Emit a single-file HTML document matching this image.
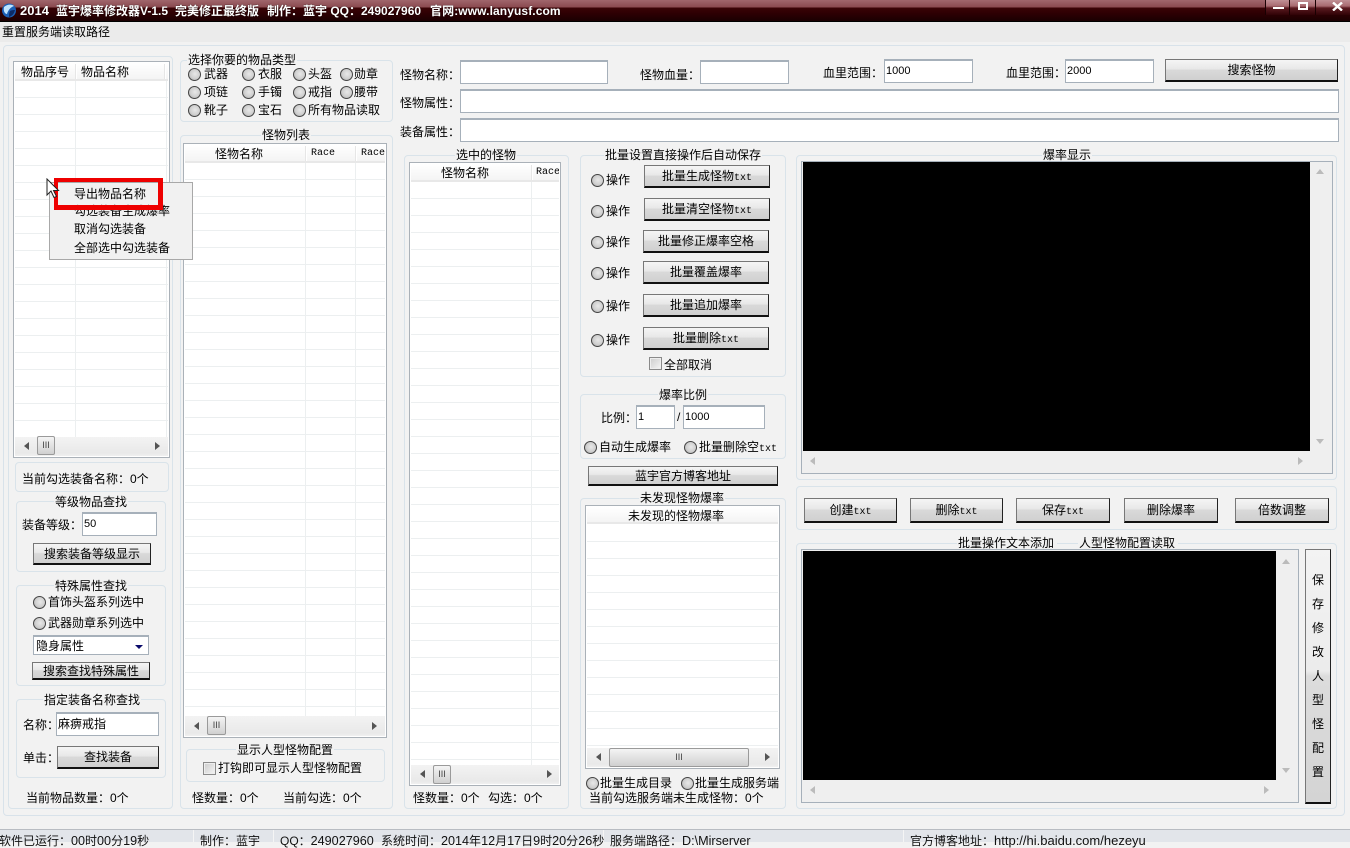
<!DOCTYPE html>
<html><head><meta charset="utf-8">
<style>
html,body{margin:0;padding:0}
body{width:1350px;height:842px;overflow:hidden;position:relative;background:#f2f2f2;font:12px/14px "Liberation Sans","WenQuanYi Zen Hei","Noto Sans CJK SC",sans-serif;color:#000}
div,i,b,u{position:absolute;box-sizing:border-box;font-style:normal;text-decoration:none}
.t{white-space:nowrap;height:14px}
.m{font-family:"Liberation Mono","WenQuanYi Zen Hei",monospace;font-size:10px}
.g{border:1px solid #d9e3ea;border-radius:4px}
.gt{white-space:nowrap;background:#f2f2f2;padding:0 1px;height:14px;margin-top:1px}
.in{background:#fff;border:1px solid #a6b0ba;border-width:2px 1px 1px 1px;padding:2px 1px;line-height:16px;white-space:nowrap}
.n{font-size:11px}
.bt{border:1px solid #777;border-right:1px solid #222;border-bottom:2px solid #111;background:linear-gradient(#f5f5f5,#e8e8e8 45%,#d9d9d9 50%,#d0d0d0);text-align:center;white-space:nowrap}
.r{width:13px;height:13px;border-radius:50%;border:1px solid #444;background:radial-gradient(circle at 55% 45%,#e8e8e8,#cfcfcf 55%,#9a9a9a)}
.c{width:13px;height:13px;border:1px solid #8a8a8a;background:linear-gradient(135deg,#ccc,#f5f5f5);box-shadow:inset 0 0 0 1px #eee}
.l{background:#fff;border:1px solid #aab1b8;overflow:hidden}
.l>div,.l>i{transform:translate(1px,1px)}
.h{background:linear-gradient(#fff,#f4f4f4);border-bottom:2px solid #e8e8e8}
.hd{width:2px;background:#e6e6e6;border-right:1px solid #fff}
.rows{background-image:repeating-linear-gradient(#fff 0,#fff 16px,#eceff0 16px,#eceff0 17px)}
.vl{width:1px;background:#eceff0}
.sb{background:linear-gradient(#f3f3f3,#e9e9e9 85%,#f0f0f0)}
.th{background:linear-gradient(#f4f4f4,#d0d0d0);border:1px solid #9a9a9a;border-radius:2px;text-align:center;font-size:9px;line-height:16px;color:#444}
.al,.ar,.au,.ad{width:0;height:0}
.al{border:4px solid transparent;border-right:5px solid #555;border-left:0}
.ar{border:4px solid transparent;border-left:5px solid #555;border-right:0}
.au{border:4px solid transparent;border-bottom:5px solid #bbb;border-top:0}
.ad{border:4px solid transparent;border-top:5px solid #bbb;border-bottom:0}
.w{color:#fff;font-weight:bold;font-size:12px;white-space:nowrap;text-shadow:0 0 1px #000}
.sep{width:1px;top:830px;height:12px;background:#c2c6cc;border-right:1px solid #f5f5f5}
.st{top:834px;font-size:12px;color:#111;white-space:nowrap}
.st span{font-size:12.6px}
</style></head><body>

<!-- title bar -->
<div style="left:0;top:0;width:1350px;height:22px;background:linear-gradient(#a0666c 0,#8a4a50 7px,#3a0306 8px,#2c0003 14px,#1a0002 21px,#000 21px)"></div>
<svg style="position:absolute;left:1px;top:2px" width="16" height="17" viewBox="0 0 16 17"><circle cx="8" cy="8.500" r="7" fill="#1b5fb5"/><path d="M3 5C6 2 11 2 13 4 10 5 7 8 6 12 4 12 2 9 3 5Z" fill="#bfe4ff"/><path d="M9 9c2-1 4-1 5-1-1 4-3 6-6 7 0-2 0-4 1-6Z" fill="#0c2a66"/></svg>
<b class="w" style="left:20px;top:4px;font-size:13px">2014</b>
<b class="w" style="left:56px;top:4px">蓝宇爆率修改器V-1.5</b>
<b class="w" style="left:175px;top:4px">完美修正最终版</b>
<b class="w" style="left:267px;top:4px">制作：蓝宇 QQ：249027960</b>
<b class="w" style="left:430px;top:4px;letter-spacing:.1px">官网:www.lanyusf.com</b>
<div style="left:1265px;top:0;width:25px;height:15px;background:linear-gradient(#c09095,#a86a70 6px,#5a1a20 8px,#300206);border-left:1px solid #1a0002;border-right:1px solid #1a0002"></div>
<div style="left:1290px;top:0;width:26px;height:15px;background:linear-gradient(#c09095,#a86a70 6px,#5a1a20 8px,#300206);border-right:1px solid #1a0002"></div>
<div style="left:1316px;top:0;width:34px;height:15px;background:linear-gradient(#c09095,#a86a70 6px,#5a1a20 8px,#300206)"></div>
<div style="left:1273px;top:7px;width:11px;height:2px;background:#fff"></div>
<div style="left:1298px;top:2px;width:10px;height:8px;border:2px solid #fff"></div>
<svg style="position:absolute;left:1332px;top:2px" width="11" height="9" viewBox="0 0 11 9"><path d="M1 0.500 10 8.500M10 0.500 1 8.500" stroke="#fff" stroke-width="2.400"/></svg>

<!-- menu -->
<div style="left:0;top:22px;width:1350px;height:20px;background:#ebebeb"></div>
<i class="t" style="left:2px;top:25px">重置服务端读取路径</i>

<!-- outer -->
<div class="g" style="left:3px;top:45px;width:1342px;height:771px;border-color:#d8e2ea"></div>
<div class="g" style="left:8px;top:56px;width:165px;height:753px"></div>
<div class="g" style="left:180px;top:135px;width:213px;height:674px"></div>

<!-- item list -->
<div class="l" style="left:13px;top:61px;width:157px;height:397px">
 <div class="h" style="left:0;top:0;width:153px;height:18px"></div>
 <div class="hd" style="left:60px;top:1px;height:15px"></div>
 <div class="hd" style="left:149px;top:1px;height:15px"></div>
 <i class="t" style="left:6px;top:2px">物品序号</i>
 <i class="t" style="left:66px;top:2px">物品名称</i>
 <div class="rows" style="left:0;top:18px;width:153px;height:356px"></div>
 <div class="vl" style="left:60px;top:18px;height:356px"></div>
 <div class="vl" style="left:151px;top:18px;height:356px"></div>
 <div class="sb" style="left:0;top:374px;width:153px;height:19px"></div>
 <div class="al" style="left:9px;top:379px"></div>
 <div class="ar" style="left:140px;top:379px"></div>
 <div class="th" style="left:22px;top:373px;width:18px;height:19px">III</div>
</div>

<!-- left groups -->
<div class="g" style="left:15px;top:462px;width:154px;height:30px"></div>
<i class="t" style="left:22px;top:472px">当前勾选装备名称：0个</i>

<div class="g" style="left:16px;top:501px;width:150px;height:71px"></div>
<i class="gt" style="left:54px;top:494px">等级物品查找</i>
<i class="t" style="left:22px;top:518px">装备等级：</i>
<div class="in n" style="left:82px;top:512px;width:75px;height:24px">50</div>
<div class="bt" style="left:33px;top:543px;width:118px;height:22px;line-height:20px">搜索装备等级显示</div>

<div class="g" style="left:16px;top:585px;width:150px;height:101px"></div>
<i class="gt" style="left:54px;top:578px">特殊属性查找</i>
<div class="r" style="left:33px;top:596px"></div><i class="t" style="left:48px;top:595px">首饰头盔系列选中</i>
<div class="r" style="left:33px;top:617px"></div><i class="t" style="left:48px;top:616px">武器勋章系列选中</i>
<div class="in" style="left:33px;top:635px;width:116px;height:20px;padding:1px 2px">隐身属性</div>
<div style="left:135px;top:645px;width:0;height:0;border:4px solid transparent;border-top:4px solid #0a0a6a;border-bottom:0"></div>
<div class="bt" style="left:32px;top:662px;width:118px;height:18px;line-height:16px">搜索查找特殊属性</div>

<div class="g" style="left:16px;top:699px;width:150px;height:79px"></div>
<i class="gt" style="left:43px;top:692px">指定装备名称查找</i>
<i class="t" style="left:23px;top:718px">名称：</i>
<div class="in" style="left:56px;top:712px;width:103px;height:24px">麻痹戒指</div>
<i class="t" style="left:23px;top:751px">单击：</i>
<div class="bt" style="left:57px;top:746px;width:102px;height:23px;line-height:21px">查找装备</div>
<i class="t" style="left:26px;top:791px">当前物品数量：0个</i>

<!-- item type -->
<div class="g" style="left:180px;top:60px;width:213px;height:62px"></div>
<i class="gt" style="left:187px;top:52px">选择你要的物品类型</i>
<div class="r" style="left:188px;top:68px"></div><i class="t" style="left:204px;top:67px">武器</i>
<div class="r" style="left:242px;top:68px"></div><i class="t" style="left:258px;top:67px">衣服</i>
<div class="r" style="left:293px;top:68px"></div><i class="t" style="left:308px;top:67px">头盔</i>
<div class="r" style="left:340px;top:68px"></div><i class="t" style="left:354px;top:67px">勋章</i>
<div class="r" style="left:188px;top:86px"></div><i class="t" style="left:204px;top:85px">项链</i>
<div class="r" style="left:242px;top:86px"></div><i class="t" style="left:258px;top:85px">手镯</i>
<div class="r" style="left:293px;top:86px"></div><i class="t" style="left:308px;top:85px">戒指</i>
<div class="r" style="left:340px;top:86px"></div><i class="t" style="left:354px;top:85px">腰带</i>
<div class="r" style="left:188px;top:104px"></div><i class="t" style="left:204px;top:103px">靴子</i>
<div class="r" style="left:242px;top:104px"></div><i class="t" style="left:258px;top:103px">宝石</i>
<div class="r" style="left:293px;top:104px"></div><i class="t" style="left:308px;top:103px">所有物品读取</i>

<!-- monster list -->
<i class="gt" style="left:261px;top:127px">怪物列表</i>
<div class="l" style="left:183px;top:143px;width:204px;height:595px">
 <div class="h" style="left:0;top:0;width:200px;height:18px"></div>
 <div class="hd" style="left:120px;top:1px;height:15px"></div>
 <div class="hd" style="left:170px;top:1px;height:15px"></div>
 <i class="t" style="left:30px;top:2px">怪物名称</i>
 <i class="t m" style="left:126px;top:2px">Race</i>
 <i class="t m" style="left:176px;top:2px">Race</i>
 <div class="rows" style="left:0;top:18px;width:200px;height:553px"></div>
 <div class="vl" style="left:120px;top:18px;height:553px"></div>
 <div class="vl" style="left:170px;top:18px;height:553px"></div>
 <div class="sb" style="left:0;top:571px;width:200px;height:20px"></div>
 <div class="al" style="left:9px;top:577px"></div>
 <div class="ar" style="left:187px;top:577px"></div>
 <div class="th" style="left:22px;top:571px;width:19px;height:19px">III</div>
</div>
<div class="g" style="left:186px;top:749px;width:199px;height:33px"></div>
<i class="gt" style="left:236px;top:742px">显示人型怪物配置</i>
<div class="c" style="left:203px;top:762px"></div><i class="t" style="left:218px;top:761px">打钩即可显示人型怪物配置</i>
<i class="t" style="left:192px;top:791px">怪数量：0个</i>
<i class="t" style="left:283px;top:791px">当前勾选：0个</i>

<!-- top inputs -->
<i class="t" style="left:400px;top:68px">怪物名称：</i>
<div class="in" style="left:460px;top:60px;width:148px;height:24px"></div>
<i class="t" style="left:640px;top:68px">怪物血量：</i>
<div class="in" style="left:700px;top:60px;width:89px;height:24px"></div>
<i class="t" style="left:823px;top:66px">血里范围：</i>
<div class="in n" style="left:884px;top:59px;width:89px;height:24px">1000</div>
<i class="t" style="left:1006px;top:66px">血里范围：</i>
<div class="in n" style="left:1065px;top:59px;width:89px;height:24px">2000</div>
<div class="bt" style="left:1165px;top:59px;width:173px;height:23px;line-height:21px">搜索怪物</div>
<i class="t" style="left:400px;top:96px">怪物属性：</i>
<div class="in" style="left:460px;top:89px;width:879px;height:24px"></div>
<i class="t" style="left:400px;top:125px">装备属性：</i>
<div class="in" style="left:460px;top:118px;width:879px;height:24px"></div>

<!-- selected monsters -->
<div class="g" style="left:404px;top:155px;width:165px;height:654px"></div>
<i class="gt" style="left:455px;top:147px">选中的怪物</i>
<div class="l" style="left:409px;top:162px;width:152px;height:624px">
 <div class="h" style="left:0;top:0;width:148px;height:18px"></div>
 <div class="hd" style="left:120px;top:1px;height:15px"></div>
 <i class="t" style="left:30px;top:2px">怪物名称</i>
 <i class="t m" style="left:125px;top:2px;width:23px;overflow:hidden">Race</i>
 <div class="rows" style="left:0;top:18px;width:148px;height:583px"></div>
 <div class="vl" style="left:120px;top:18px;height:583px"></div>
 <div class="sb" style="left:0;top:601px;width:148px;height:19px"></div>
 <div class="al" style="left:9px;top:606px"></div>
 <div class="ar" style="left:136px;top:606px"></div>
 <div class="th" style="left:22px;top:601px;width:18px;height:19px">III</div>
</div>
<i class="t" style="left:413px;top:791px">怪数量：0个</i>
<i class="t" style="left:488px;top:791px">勾选：0个</i>

<!-- batch -->
<div class="g" style="left:580px;top:155px;width:206px;height:222px"></div>
<i class="gt" style="left:604px;top:147px">批量设置直接操作后自动保存</i>
<div class="r" style="left:591px;top:174px"></div><i class="t" style="left:606px;top:173px">操作</i>
<div class="r" style="left:591px;top:205px"></div><i class="t" style="left:606px;top:204px">操作</i>
<div class="r" style="left:591px;top:236px"></div><i class="t" style="left:606px;top:235px">操作</i>
<div class="r" style="left:591px;top:267px"></div><i class="t" style="left:606px;top:266px">操作</i>
<div class="r" style="left:591px;top:300px"></div><i class="t" style="left:606px;top:299px">操作</i>
<div class="r" style="left:591px;top:334px"></div><i class="t" style="left:606px;top:333px">操作</i>
<div class="bt" style="left:644px;top:165px;width:126px;height:23px;line-height:20px">批量生成怪物<span class="m">txt</span></div>
<div class="bt" style="left:644px;top:198px;width:126px;height:23px;line-height:20px">批量清空怪物<span class="m">txt</span></div>
<div class="bt" style="left:643px;top:230px;width:126px;height:23px;line-height:21px">批量修正爆率空格</div>
<div class="bt" style="left:643px;top:261px;width:126px;height:23px;line-height:21px">批量覆盖爆率</div>
<div class="bt" style="left:643px;top:294px;width:126px;height:23px;line-height:21px">批量追加爆率</div>
<div class="bt" style="left:643px;top:327px;width:126px;height:23px;line-height:21px">批量删除<span class="m">txt</span></div>
<div class="c" style="left:649px;top:357px"></div><i class="t" style="left:664px;top:358px">全部取消</i>

<div class="g" style="left:580px;top:394px;width:206px;height:65px"></div>
<i class="gt" style="left:658px;top:387px">爆率比例</i>
<i class="t" style="left:601px;top:411px">比例：</i>
<div class="in n" style="left:636px;top:405px;width:39px;height:24px">1</div>
<i class="t" style="left:677px;top:410px">/</i>
<div class="in n" style="left:683px;top:405px;width:82px;height:24px">1000</div>
<div class="r" style="left:584px;top:441px"></div><i class="t" style="left:599px;top:440px">自动生成爆率</i>
<div class="r" style="left:684px;top:441px"></div><i class="t" style="left:699px;top:440px">批量删除空<span class="m">txt</span></i>
<div class="bt" style="left:588px;top:466px;width:190px;height:20px;line-height:18px">蓝宇官方博客地址</div>

<div class="g" style="left:580px;top:498px;width:206px;height:311px"></div>
<i class="gt" style="left:639px;top:490px">未发现怪物爆率</i>
<div class="l" style="left:585px;top:505px;width:195px;height:264px">
 <div class="h" style="left:0;top:0;width:191px;height:17px"></div>
 <i class="t" style="left:41px;top:2px">未发现的怪物爆率</i>
 <div class="rows" style="left:0;top:18px;width:191px;height:222px"></div>
 <div class="sb" style="left:0;top:241px;width:191px;height:19px"></div>
 <div class="al" style="left:9px;top:246px"></div>
 <div class="ar" style="left:178px;top:246px"></div>
 <div class="th" style="left:22px;top:241px;width:140px;height:19px">III</div>
</div>
<div class="r" style="left:586px;top:777px"></div><i class="t" style="left:600px;top:776px">批量生成目录</i>
<div class="r" style="left:681px;top:777px"></div><i class="t" style="left:695px;top:776px">批量生成服务端</i>
<i class="t" style="left:589px;top:791px">当前勾选服务端未生成怪物：0个</i>

<!-- rate display -->
<div class="g" style="left:796px;top:155px;width:541px;height:325px"></div>
<i class="gt" style="left:1042px;top:147px">爆率显示</i>
<div style="left:801px;top:161px;width:532px;height:313px;border:1px solid #a6b0ba;background:#efefef"></div>
<div style="left:803px;top:162px;width:507px;height:289px;background:#000"></div>
<div class="au" style="left:1316px;top:169px"></div>
<div class="ad" style="left:1316px;top:439px"></div>
<div class="al" style="left:810px;top:457px;border-right-color:#bbb"></div>
<div class="ar" style="left:1298px;top:457px;border-left-color:#bbb"></div>

<div class="g" style="left:796px;top:486px;width:541px;height:44px"></div>
<div class="bt" style="left:804px;top:498px;width:93px;height:25px;line-height:23px">创建<span class="m">txt</span></div>
<div class="bt" style="left:910px;top:498px;width:93px;height:25px;line-height:23px">删除<span class="m">txt</span></div>
<div class="bt" style="left:1016px;top:498px;width:94px;height:25px;line-height:23px">保存<span class="m">txt</span></div>
<div class="bt" style="left:1124px;top:498px;width:94px;height:25px;line-height:23px">删除爆率</div>
<div class="bt" style="left:1235px;top:498px;width:94px;height:25px;line-height:23px">倍数调整</div>

<div class="g" style="left:796px;top:543px;width:541px;height:266px"></div>
<i class="gt" style="left:957px;top:535px;width:100px">批量操作文本添加</i>
<i class="gt" style="left:1078px;top:535px;width:100px">人型怪物配置读取</i>
<div style="left:801px;top:549px;width:498px;height:254px;border:1px solid #a6b0ba;background:#efefef"></div>
<div style="left:803px;top:551px;width:473px;height:229px;background:#000"></div>
<div class="au" style="left:1282px;top:559px"></div>
<div class="ad" style="left:1282px;top:768px"></div>
<div class="al" style="left:810px;top:786px;border-right-color:#bbb"></div>
<div class="ar" style="left:1264px;top:786px;border-left-color:#bbb"></div>

<div class="bt" style="left:1305px;top:549px;width:26px;height:255px;background:linear-gradient(#f3f3f3,#ececec 48%,#dcdcdc 50%,#d4d4d4)"></div>
<i class="t" style="left:1312px;top:573px">保</i>
<i class="t" style="left:1312px;top:597px">存</i>
<i class="t" style="left:1312px;top:621px">修</i>
<i class="t" style="left:1312px;top:645px">改</i>
<i class="t" style="left:1312px;top:669px">人</i>
<i class="t" style="left:1312px;top:693px">型</i>
<i class="t" style="left:1312px;top:717px">怪</i>
<i class="t" style="left:1312px;top:741px">配</i>
<i class="t" style="left:1312px;top:765px">置</i>

<!-- status -->
<div style="left:0;top:829px;width:1350px;height:13px;background:#e2e5ea;border-top:1px solid #b8bcc2"></div>
<div class="sep" style="left:193px"></div>
<div class="sep" style="left:273px"></div>
<div class="sep" style="left:603px"></div>
<div class="sep" style="left:903px"></div>
<i class="st" style="left:-1px">软件已运行：<span>00</span>时<span>00</span>分<span>19</span>秒</i>
<i class="st" style="left:200px">制作：蓝宇</i>
<i class="st" style="left:280px">QQ：<span>249027960</span></i>
<i class="st" style="left:381px">系统时间：<span>2014</span>年<span>12</span>月<span>17</span>日<span>9</span>时<span>20</span>分<span>26</span>秒</i>
<i class="st" style="left:610px">服务端路径：<span>D:\Mirserver</span></i>
<i class="st" style="left:910px">官方博客地址：<span style="font-size:13px">http://hi.baidu.com/hezeyu</span></i>

<!-- context menu (on top) -->
<div style="left:49px;top:182px;width:144px;height:78px;background:#f1f1f1;border:1px solid #a8a8a8"></div>
<i class="t" style="left:74px;top:187px">导出物品名称</i>
<i class="t" style="left:74px;top:204px">勾选装备生成爆率</i>
<i class="t" style="left:74px;top:222px">取消勾选装备</i>
<i class="t" style="left:74px;top:241px">全部选中勾选装备</i>
<div style="left:54px;top:178px;width:109px;height:32px;border:4px solid #ee0000;border-bottom-width:5px;border-right-width:5px"></div>
<svg style="position:absolute;left:46px;top:178px" width="14" height="21" viewBox="0 0 14 21"><path d="M1 1V17L5 13 8 19.500 10.500 18.500 7.500 12.500H12.500Z" fill="#fff" stroke="#222" stroke-width="1"/></svg>
</body></html>
